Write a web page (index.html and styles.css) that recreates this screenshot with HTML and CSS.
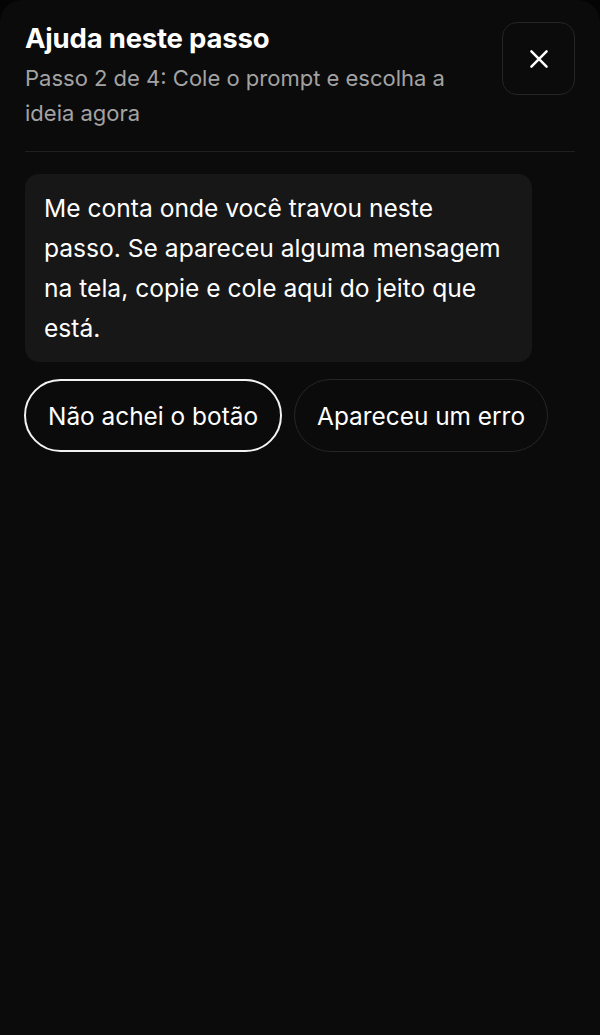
FILE: index.html
```html
<!DOCTYPE html>
<html lang="pt-BR">
<head>
  <meta charset="UTF-8">
  <title>Ajuda neste passo</title>
  <link rel="stylesheet" href="styles.css">
</head>
<body>
  <div class="sheet">
    <!-- Header -->
    <div class="sheet-header">
      <div class="titles">
        <h1>Ajuda neste passo</h1>
        <p class="step">Passo 2 de 4: Cole o prompt e escolha a ideia agora</p>
      </div>
      <button class="close" aria-label="Fechar">
        <svg width="26" height="26" viewBox="0 0 24 24" fill="none" stroke="#fff" stroke-width="2.3" stroke-linecap="round">
          <path d="M5 5l14 14M19 5L5 19"/>
        </svg>
      </button>
    </div>

    <!-- Chat -->
    <div class="chat">
      <div class="bubble">
        <p>Me conta onde você travou neste passo. Se apareceu alguma mensagem na tela, copie e cole aqui do jeito que está.</p>
      </div>
      <div class="choices">
        <button class="chip active">Não achei o botão</button>
        <button class="chip">Apareceu um erro</button>
      </div>
    </div>
  </div>
</body>
</html>
```

FILE: styles.css
```css
/* Basic reset */
* {
  box-sizing: border-box;
}
body {
  margin: 0;
  background: #040404;
  font-family: Inter, "Noto Sans", sans-serif;
  color: #fff;
}
.sheet {
  min-height: 1035px;
  background: #0b0b0b;
  border-radius: 22px 22px 0 0;
  padding: 22px 25px;
}
.sheet-header {
  display: flex;
  align-items: flex-start;
  justify-content: space-between;
  gap: 20px;
  padding-bottom: 20px;
  border-bottom: 1px solid #202020;
}
.titles {
  flex: 1;
  max-width: 450px;
}
h1 {
  margin: 0;
  font-size: 27.5px;
  line-height: 32px;
  font-weight: 700;
  letter-spacing: -0.2px;
}
.step {
  margin: 7px 0 0;
  font-size: 22px;
  line-height: 35px;
  color: #a3a3a3;
}
.close {
  width: 73px;
  height: 73px;
  flex: none;
  display: flex;
  align-items: center;
  justify-content: center;
  background: #0b0b0b;
  border: 1px solid #252525;
  border-radius: 15px;
  cursor: pointer;
}
/* Chat area */
.chat {
  padding-top: 22px;
}
.bubble {
  width: 507px;
  background: #171717;
  border-radius: 14px;
  padding: 14px 28px 14px 19px;
}
.bubble p {
  margin: 0;
  font-size: 24.6px;
  line-height: 40px;
}
.choices {
  display: flex;
  gap: 12px;
  margin-top: 17px;
  margin-left: -1px;
}
.chip {
  height: 73px;
  padding: 0 22px;
  background: transparent;
  color: #fff;
  font-family: inherit;
  font-size: 24.4px;
  border: 1.5px solid #262626;
  border-radius: 37px;
  cursor: pointer;
}
.chip.active {
  border: 2px solid #f2f2f2;
}
```
